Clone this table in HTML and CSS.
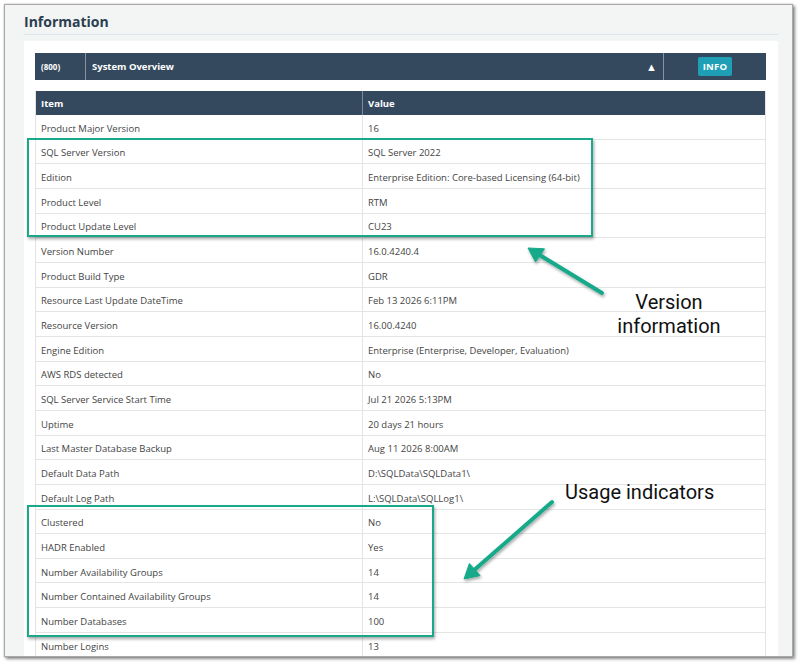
FILE: index.html
```html
<!DOCTYPE html>
<html>
<head>
<meta charset="utf-8">
<link rel="stylesheet" href="styles.css">
</head>
<body>
<div class="shot">
  <div class="frame">
    <h1 class="title">Information</h1>
    <div class="panel">
      <div class="bar">
        <div class="bar-id">(800)</div>
        <div class="bar-name"><span>System Overview</span><span class="caret">&#9650;</span></div>
        <div class="bar-badge"><span class="badge">INFO</span></div>
      </div>
      <div class="grid">
        <div class="row head"><div class="c1">Item</div><div class="c2">Value</div></div>
        <div class="row"><div class="c1">Product Major Version</div><div class="c2">16</div></div>
        <div class="row"><div class="c1">SQL Server Version</div><div class="c2">SQL Server 2022</div></div>
        <div class="row"><div class="c1">Edition</div><div class="c2">Enterprise Edition: Core-based Licensing (64-bit)</div></div>
        <div class="row"><div class="c1">Product Level</div><div class="c2">RTM</div></div>
        <div class="row"><div class="c1">Product Update Level</div><div class="c2">CU23</div></div>
        <div class="row"><div class="c1">Version Number</div><div class="c2">16.0.4240.4</div></div>
        <div class="row"><div class="c1">Product Build Type</div><div class="c2">GDR</div></div>
        <div class="row"><div class="c1">Resource Last Update DateTime</div><div class="c2">Feb 13 2026 6:11PM</div></div>
        <div class="row"><div class="c1">Resource Version</div><div class="c2">16.00.4240</div></div>
        <div class="row"><div class="c1">Engine Edition</div><div class="c2">Enterprise (Enterprise, Developer, Evaluation)</div></div>
        <div class="row"><div class="c1">AWS RDS detected</div><div class="c2">No</div></div>
        <div class="row"><div class="c1">SQL Server Service Start Time</div><div class="c2">Jul 21 2026 5:13PM</div></div>
        <div class="row"><div class="c1">Uptime</div><div class="c2">20 days 21 hours</div></div>
        <div class="row"><div class="c1">Last Master Database Backup</div><div class="c2">Aug 11 2026 8:00AM</div></div>
        <div class="row"><div class="c1">Default Data Path</div><div class="c2">D:\SQLData\SQLData1\</div></div>
        <div class="row"><div class="c1">Default Log Path</div><div class="c2">L:\SQLData\SQLLog1\</div></div>
        <div class="row"><div class="c1">Clustered</div><div class="c2">No</div></div>
        <div class="row"><div class="c1">HADR Enabled</div><div class="c2">Yes</div></div>
        <div class="row"><div class="c1">Number Availability Groups</div><div class="c2">14</div></div>
        <div class="row"><div class="c1">Number Contained Availability Groups</div><div class="c2">14</div></div>
        <div class="row"><div class="c1">Number Databases</div><div class="c2">100</div></div>
        <div class="row"><div class="c1">Number Logins</div><div class="c2">13</div></div>
        <div class="row"><div class="c1">&nbsp;</div><div class="c2">&nbsp;</div></div>
      </div>
    </div>
  </div>

  <div class="hl hl-version"></div>
  <div class="hl hl-usage"></div>
  <svg class="arrows" width="800" height="664" viewBox="0 0 800 664">
    <defs>
      <filter id="sh" x="-20%" y="-20%" width="140%" height="140%">
        <feDropShadow dx="1" dy="2" stdDeviation="1.5" flood-color="#000" flood-opacity="0.35"/>
      </filter>
    </defs>
    <g filter="url(#sh)" fill="#19a98a" stroke="#19a98a">
      <line x1="602" y1="293" x2="540" y2="255.3" stroke-width="4" stroke-linecap="round"/>
      <polygon points="528,248 544.5,248.8 535.5,262" stroke-width="1" stroke-linejoin="round"/>
      <line x1="552" y1="502" x2="474.5" y2="569.8" stroke-width="4" stroke-linecap="round"/>
      <polygon points="464,579 469.4,563.5 480.1,575.6" stroke-width="1" stroke-linejoin="round"/>
    </g>
  </svg>
  <div class="note note-version">Version<br>information</div>
  <div class="note note-usage">Usage indicators</div>
</div>
</body>
</html>
```

FILE: styles.css
```css
* { box-sizing: border-box; }
html, body { margin: 0; padding: 0; background: #ffffff; }
body { font-family: "Open Sans", "Noto Sans", sans-serif; }

.shot {
  position: relative;
  width: 800px;
  height: 664px;
  padding: 4px 0 0 4px;
  overflow: hidden;
}

.frame {
  width: 789px;
  height: 653px;
  border: 1px solid #a9a9a9;
  background: #f3f5f5;
  box-shadow: 2px 2px 3px rgba(0, 0, 0, 0.45), 0 0 2px rgba(0, 0, 0, 0.25);
  padding: 0 14px 0 19px;
  overflow: hidden;
  display: flex;
  flex-direction: column;
}

.title {
  margin: 0;
  padding: 7px 0 2px 0;
  font-size: 14px;
  line-height: 20px;
  font-weight: 700;
  color: #2c3e50;
  border-bottom: 1px solid #dbe6ef;
}

.panel {
  margin-top: 6px;
  flex: 1;
  background: #ffffff;
  padding: 12px 12px 0 11px;
}

.bar {
  display: flex;
  height: 27px;
  background: #34495e;
  color: #ffffff;
  font-weight: 700;
  font-size: 9.5px;
}
.bar-id {
  width: 51px;
  border-right: 1px solid #8593a1;
  display: flex;
  align-items: center;
  padding-left: 6px;
  font-size: 8px;
}
.bar-name {
  flex: 1;
  display: flex;
  align-items: center;
  justify-content: space-between;
  padding: 0 6px 0 6px;
  border-right: 1px solid #8593a1;
}
.caret { font-size: 11px; }
.bar-badge {
  width: 102px;
  display: flex;
  align-items: center;
  justify-content: center;
}
.badge {
  background: #1e9fb6;
  border-radius: 2px;
  padding: 0 5px;
  height: 19px;
  line-height: 19px;
  font-size: 9.5px;
  letter-spacing: 0.2px;
}

.grid {
  margin-top: 11px;
  border-left: 1px solid #e4e4e4;
  border-right: 1px solid #e4e4e4;
}
.row {
  display: grid;
  grid-template-columns: 327px 1fr;
  height: 24.67px;
  border-bottom: 1px solid #e4e4e4;
  font-size: 9.5px;
  color: #444444;
}
.row > div {
  display: flex;
  align-items: center;
  padding: 3px 0 0 5px;
  white-space: nowrap;
}
.row .c1 { border-right: 1px solid #e4e4e4; }
.row.head {
  height: 24px;
  background: #34495e;
  color: #ffffff;
  font-weight: 700;
  border-bottom: none;
}
.row.head > div { padding-top: 0; }
.row.head .c1 { border-right: 1px solid #7d8a98; }

.hl {
  position: absolute;
  border: 2px solid #19a98a;
  box-shadow: 1px 2px 3px rgba(0, 0, 0, 0.35);
}
.hl-version { left: 27px; top: 138px; width: 566px; height: 99px; }
.hl-usage { left: 27px; top: 505px; width: 407px; height: 132px; }

.arrows { position: absolute; left: 0; top: 0; }

.note {
  position: absolute;
  font-family: Roboto, "Noto Sans", sans-serif;
  font-size: 20px;
  line-height: 24px;
  color: #111111;
  text-align: center;
}
.note-version { left: 610px; top: 290px; width: 118px; }
.note-usage { left: 565px; top: 480px; white-space: nowrap; }
```
